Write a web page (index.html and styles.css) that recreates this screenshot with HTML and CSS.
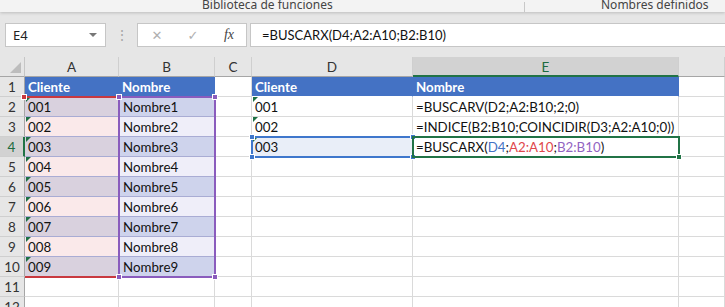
FILE: index.html
```html
<!DOCTYPE html>
<html lang="es">
<head>
    <meta charset="UTF-8">
    <title>BUSCARX</title>
    <link rel="stylesheet" href="styles.css">
</head>
<body>
    <div class="ribbon">
        <span class="group groupFunc">Biblioteca de funciones</span>
        <span class="ribbonSep"></span>
        <span class="group groupNames">Nombres definidos</span>
    </div>

    <div class="formulaBar">
        <div class="nameBox">E4<span class="nameArrow"></span></div>
        <div class="grip">&#8942;</div>
        <div class="fxButtons">
            <span class="fxBtn">&#x2715;</span>
            <span class="fxBtn">&#x2713;</span>
            <span class="fxBtn fxLabel">fx</span>
        </div>
        <div class="formulaInput">=BUSCARX(D4;A2:A10;B2:B10)</div>
    </div>

    <div class="sheet">
        <div class="grid">
            <!-- cabecera de columnas -->
            <div class="corner"><span class="cornerTri"></span></div>
            <div class="colHead">A</div>
            <div class="colHead">B</div>
            <div class="colHead">C</div>
            <div class="colHead">D</div>
            <div class="colHead colActive">E</div>
            <div class="colHead"></div>

            <!-- fila 1 -->
            <div class="rowHead">1</div>
            <div class="cell tblHead">Cliente</div>
            <div class="cell tblHead">Nombre</div>
            <div class="cell"></div>
            <div class="cell tblHead">Cliente</div>
            <div class="cell tblHead">Nombre</div>
            <div class="cell"></div>

            <div class="rowHead">2</div>
            <div class="cell idA bandDark txt">001</div>
            <div class="cell nameB bandDark">Nombre1</div>
            <div class="cell"></div>
            <div class="cell txt">001</div>
            <div class="cell">=BUSCARV(D2;A2:B10;2;0)</div>
            <div class="cell"></div>

            <div class="rowHead">3</div>
            <div class="cell idA bandLight txt">002</div>
            <div class="cell nameB bandLight">Nombre2</div>
            <div class="cell"></div>
            <div class="cell txt">002</div>
            <div class="cell">=INDICE(B2:B10;COINCIDIR(D3;A2:A10;0))</div>
            <div class="cell"></div>

            <div class="rowHead rowActive">4</div>
            <div class="cell idA bandDark txt">003</div>
            <div class="cell nameB bandDark">Nombre3</div>
            <div class="cell"></div>
            <div class="cell refCell txt">003</div>
            <div class="cell">=BUSCARX(<span class="refD">D4</span>;<span class="refA">A2:A10</span>;<span class="refB">B2:B10</span>)</div>
            <div class="cell"></div>

            <div class="rowHead">5</div>
            <div class="cell idA bandLight txt">004</div>
            <div class="cell nameB bandLight">Nombre4</div>
            <div class="cell"></div><div class="cell"></div><div class="cell"></div><div class="cell"></div>

            <div class="rowHead">6</div>
            <div class="cell idA bandDark txt">005</div>
            <div class="cell nameB bandDark">Nombre5</div>
            <div class="cell"></div><div class="cell"></div><div class="cell"></div><div class="cell"></div>

            <div class="rowHead">7</div>
            <div class="cell idA bandLight txt">006</div>
            <div class="cell nameB bandLight">Nombre6</div>
            <div class="cell"></div><div class="cell"></div><div class="cell"></div><div class="cell"></div>

            <div class="rowHead">8</div>
            <div class="cell idA bandDark txt">007</div>
            <div class="cell nameB bandDark">Nombre7</div>
            <div class="cell"></div><div class="cell"></div><div class="cell"></div><div class="cell"></div>

            <div class="rowHead">9</div>
            <div class="cell idA bandLight txt">008</div>
            <div class="cell nameB bandLight">Nombre8</div>
            <div class="cell"></div><div class="cell"></div><div class="cell"></div><div class="cell"></div>

            <div class="rowHead">10</div>
            <div class="cell idA bandDark txt">009</div>
            <div class="cell nameB bandDark">Nombre9</div>
            <div class="cell"></div><div class="cell"></div><div class="cell"></div><div class="cell"></div>

            <div class="rowHead">11</div>
            <div class="cell"></div><div class="cell"></div><div class="cell"></div><div class="cell"></div><div class="cell"></div><div class="cell"></div>

            <div class="rowHead">12</div>
            <div class="cell"></div><div class="cell"></div><div class="cell"></div><div class="cell"></div><div class="cell"></div><div class="cell"></div>
        </div>

        <!-- rangos de referencia dibujados encima de la cuadricula -->
        <div class="range rangeA"><span class="hnd hndTL"></span></div>
        <div class="range rangeB">
            <span class="hnd hndTL"></span><span class="hnd hndTR"></span>
            <span class="hnd hndBL"></span><span class="hnd hndBR"></span>
        </div>
        <div class="range rangeD">
            <span class="hnd hndTL"></span><span class="hnd hndTR"></span>
            <span class="hnd hndBL"></span><span class="hnd hndBR"></span>
        </div>
        <div class="range activeCell"><span class="hnd hndBR"></span></div>
    </div>
</body>
</html>
```

FILE: styles.css
```css
body {
    margin: 0;
    width: 725px;
    height: 307px;
    overflow: hidden;
    background-color: #e6e6e6;
    font-family: Lato, "Liberation Sans", sans-serif;
}

/* cinta superior (cortada) */
.ribbon {
    height: 12px;
    background-color: #f3f3f3;
    display: flex;
    align-items: flex-end;
    overflow: hidden;
    box-shadow: 0 1px 3px rgba(0, 0, 0, 0.18);
    position: relative;
    font-family: "Noto Sans", "Liberation Sans", sans-serif;
}

.group {
    font-size: 12px;
    line-height: 12px;
    color: #444;
    margin-bottom: 1px;
    white-space: nowrap;
}

.groupFunc {
    margin-left: 202px;
}

.ribbonSep {
    width: 1px;
    height: 10px;
    background-color: #c8c8c8;
    position: absolute;
    left: 524px;
    bottom: 0;
}

.groupNames {
    position: absolute;
    left: 601px;
    bottom: 0;
}

/* barra de formulas */
.formulaBar {
    height: 45px;
    display: flex;
    align-items: flex-start;
    padding: 11px 0 0 5px;
    box-sizing: border-box;
}

.nameBox {
    width: 101px;
    height: 24px;
    box-sizing: border-box;
    background-color: #fff;
    border: 1px solid #c6c6c6;
    font-family: "Noto Sans", "Liberation Sans", sans-serif;
    font-size: 13px;
    line-height: 22px;
    padding-left: 7px;
    color: #222;
    display: flex;
    justify-content: space-between;
    align-items: center;
}

.nameArrow {
    width: 0;
    height: 0;
    border-left: 4px solid transparent;
    border-right: 4px solid transparent;
    border-top: 4px solid #777;
    margin-right: 8px;
}

.grip {
    width: 31px;
    text-align: center;
    color: #a8a8a8;
    font-size: 14px;
    line-height: 24px;
}

.fxButtons {
    width: 110px;
    height: 24px;
    box-sizing: border-box;
    background-color: #fff;
    border: 1px solid #c6c6c6;
    display: flex;
    align-items: center;
    padding-left: 12px;
    gap: 22px;
}

.fxBtn {
    color: #b0b0b0;
    font-family: "DejaVu Sans", sans-serif;
    font-size: 13px;
    width: 14px;
    text-align: center;
}

.fxLabel {
    color: #444;
    font-family: "Liberation Serif", "Times New Roman", serif;
    font-style: italic;
    font-size: 14px;
}

.formulaInput {
    flex: 1;
    height: 24px;
    box-sizing: border-box;
    margin-left: 3px;
    background-color: #fff;
    border: 1px solid #c6c6c6;
    border-right: none;
    padding-left: 11px;
    font-size: 13px;
    line-height: 23px;
    color: #111;
    white-space: nowrap;
}

/* hoja */
.sheet {
    position: relative;
    background-color: #fff;
}

.grid {
    display: grid;
    grid-template-columns: 25px 94px 96px 37px 161px 266px 46px;
    grid-auto-rows: 20px;
}

.corner {
    background-color: #e6e6e6;
    border-right: 1px solid #c6c6c6;
    border-bottom: 1px solid #a6a6a6;
    position: relative;
    box-sizing: border-box;
}

.cornerTri {
    position: absolute;
    right: 3px;
    bottom: 3px;
    width: 0;
    height: 0;
    border-left: 11px solid transparent;
    border-bottom: 11px solid #bdbdbd;
}

.colHead {
    background-color: #e6e6e6;
    border-right: 1px solid #cfcfcf;
    border-bottom: 1px solid #a6a6a6;
    box-sizing: border-box;
    text-align: center;
    font-size: 13.5px;
    line-height: 20px;
    color: #333;
}

.colActive {
    background-color: #d2d2d2;
    border-bottom: 2px solid #217346;
    color: #1d6b40;
}

.rowHead {
    background-color: #e6e6e6;
    border-right: 1px solid #a6a6a6;
    border-bottom: 1px solid #cfcfcf;
    box-sizing: border-box;
    text-align: center;
    font-size: 13.5px;
    line-height: 20px;
    color: #333;
}

.rowActive {
    background-color: #d2d2d2;
    border-right: 2px solid #217346;
    color: #1d6b40;
}

.cell {
    border-right: 1px solid #dadada;
    border-bottom: 1px solid #dadada;
    box-sizing: border-box;
    font-size: 13.3px;
    line-height: 19px;
    padding: 1px 0 0 3px;
    color: #111;
    white-space: nowrap;
    overflow: hidden;
    position: relative;
}

.tblHead {
    background-color: #4472c4;
    color: #fff;
    font-weight: bold;
    border-right-color: #4472c4;
    border-bottom-color: #fff;
}

.idA, .nameB {
    border-bottom-color: #a9acd4;
}

.idA.bandDark {
    background-color: #d9d1de;
}

.idA.bandLight {
    background-color: #fae9ea;
}

.nameB {
    padding-left: 4px;
}

.nameB.bandDark {
    background-color: #ced3ec;
}

.nameB.bandLight {
    background-color: #efeef9;
}

/* indicador de numero como texto */
.txt::before {
    content: "";
    position: absolute;
    left: 1px;
    top: 0;
    width: 0;
    height: 0;
    border-top: 5px solid #1e7145;
    border-right: 5px solid transparent;
}

.refCell {
    background-color: #e9eef8;
}

.refD {
    color: #4472c4;
}

.refA {
    color: #e0474c;
}

.refB {
    color: #9264c2;
}

/* rangos resaltados */
.range {
    position: absolute;
    box-sizing: border-box;
}

.rangeA {
    left: 25px;
    top: 39px;
    width: 95px;
    height: 182px;
    border-top: 2px solid #c9393f;
    border-bottom: 2px solid #c9393f;
}

.rangeB {
    left: 118px;
    top: 39px;
    width: 98px;
    height: 182px;
    border: 2px solid #8a5cbd;
}

.rangeD {
    left: 251px;
    top: 79px;
    width: 163px;
    height: 22px;
    border: 2px solid #3f77cc;
}

.activeCell {
    left: 412px;
    top: 79px;
    width: 268px;
    height: 22px;
    border: 2px solid #217346;
}

.hnd {
    position: absolute;
    width: 6px;
    height: 6px;
    box-sizing: border-box;
}

.hndTL { left: -4px; top: -4px; }
.hndTR { right: -4px; top: -4px; }
.hndBL { left: -4px; bottom: -4px; }
.hndBR { right: -4px; bottom: -4px; }

.rangeA .hnd {
    background-color: #c9393f;
    border: 1px solid #fff;
}

.rangeB .hnd {
    background-color: #8a5cbd;
    border: 1px solid #fff;
}

.rangeD .hnd {
    background-color: #3f77cc;
    border: 1px solid #fff;
}

.activeCell .hnd {
    background-color: #217346;
    border: 1px solid #fff;
}
```
